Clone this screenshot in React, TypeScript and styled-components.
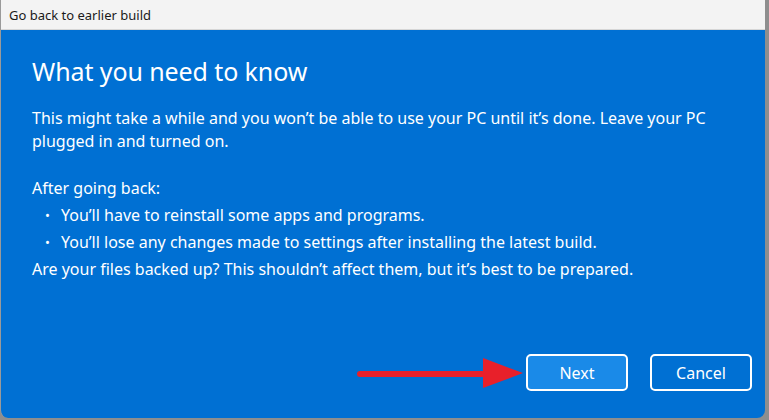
import React from "react";
import styled, { createGlobalStyle } from "styled-components";

const Global = createGlobalStyle`
  html, body { margin: 0; padding: 0; background: #8e8e8e; }
  body { width: 769px; height: 420px; overflow: hidden; font-family: "Noto Sans", "Open Sans", sans-serif; }
`;

const Window = styled.div`
  width: 765px;
  height: 418px;
  box-sizing: border-box;
  border-left: 1px solid #9a9a9a;
  display: flex;
  flex-direction: column;
  background: #0070d3;
  border-radius: 0 0 8px 8px;
  overflow: hidden;
`;

const TitleBar = styled.div`
  height: 30px;
  flex: none;
  box-sizing: border-box;
  background: #f3f3f3;
  border-bottom: 1px solid #d6d6d6;
  display: flex;
  align-items: center;
  padding-left: 8px;
  font-size: 13px;
  color: #1a1a1a;
`;

const Content = styled.div`
  flex: 1;
  padding: 24px 0 0 31px;
  color: #ffffff;
`;

const Heading = styled.h1`
  margin: 0 0 19px;
  font-size: 25px;
  font-weight: 400;
  line-height: 34px;
  letter-spacing: -0.1px;
`;

const Para = styled.p`
  margin: 0 0 22px;
  font-size: 16px;
  line-height: 23px;
  width: 716px;
`;

const Line = styled.div`
  font-size: 16px;
  line-height: 27px;
`;

const List = styled.ul`
  margin: 0;
  padding: 0 0 0 13px;
  list-style: none;
`;

const Item = styled.li`
  font-size: 16px;
  line-height: 27px;
  display: flex;
  &::before {
    content: "•";
    width: 16px;
    flex: none;
    font-size: 13px;
  }
`;

const Footer = styled.div`
  flex: none;
  display: flex;
  align-items: center;
  justify-content: flex-end;
  padding: 0 13px 27px 0;
`;

const Arrow = styled.svg`
  margin-right: 3px;
`;

const Button = styled.button<{ $primary?: boolean }>`
  width: 102px;
  height: 37px;
  box-sizing: border-box;
  border: 2px solid #ffffff;
  border-radius: 5px;
  background: ${(p) => (p.$primary ? "#1a8ae8" : "#0070d3")};
  color: #ffffff;
  font-family: inherit;
  font-size: 16px;
  margin-left: ${(p) => (p.$primary ? "0" : "22px")};
  padding: 0;
`;

export default function App() {
  return (
    <>
      <Global />
      <Window>
        <TitleBar>Go back to earlier build</TitleBar>
        <Content>
          <Heading>What you need to know</Heading>
          <Para>
            This might take a while and you won’t be able to use your PC until it’s done. Leave your PC
            plugged in and turned on.
          </Para>
          <Line>After going back:</Line>
          <List>
            <Item>You’ll have to reinstall some apps and programs.</Item>
            <Item>You’ll lose any changes made to settings after installing the latest build.</Item>
          </List>
          <Line>Are your files backed up? This shouldn’t affect them, but it’s best to be prepared.</Line>
        </Content>
        <Footer>
          <Arrow width="166" height="32" viewBox="0 0 166 32">
            <line x1="3" y1="17" x2="130" y2="17" stroke="#e8202a" strokeWidth="6" strokeLinecap="round" />
            <polygon points="126,1 166,16 126,31" fill="#e8202a" />
          </Arrow>
          <Button $primary>Next</Button>
          <Button>Cancel</Button>
        </Footer>
      </Window>
    </>
  );
}
